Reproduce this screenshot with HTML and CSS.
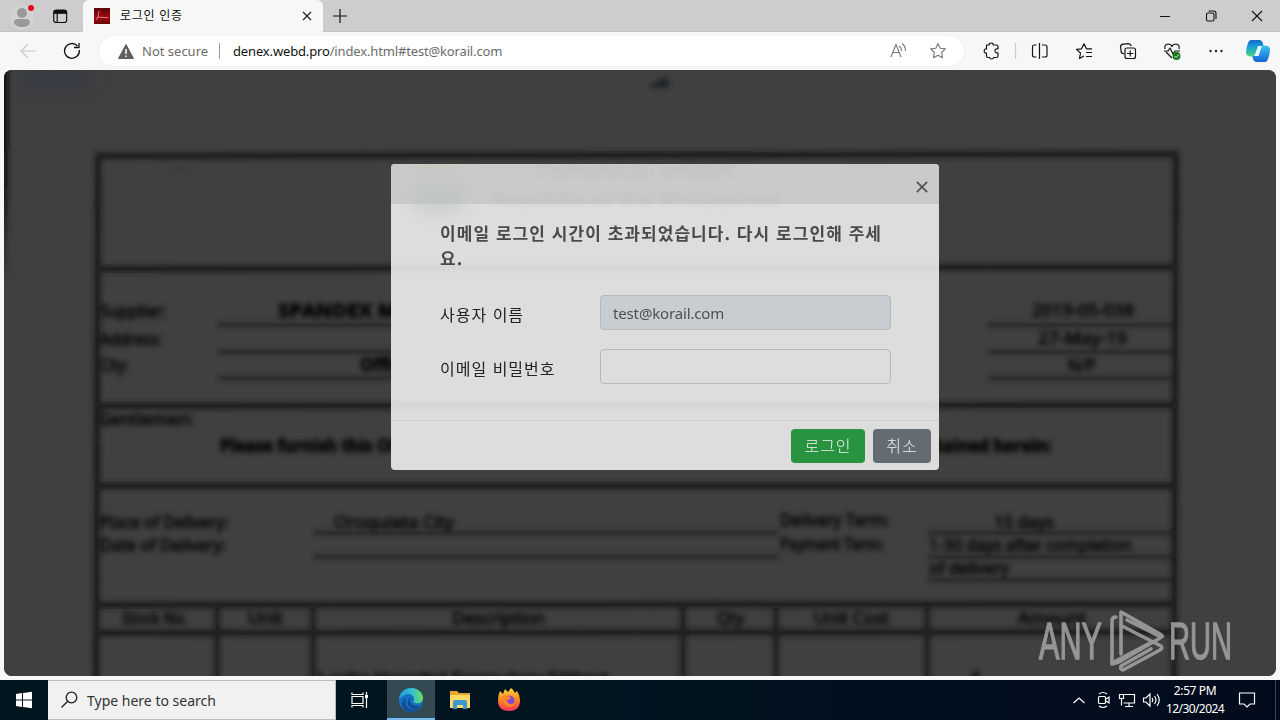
FILE: index.html
```html
<!DOCTYPE html>
<html lang="ko">
<head>
<meta charset="utf-8">
<title>로그인 인증</title>
<link rel="stylesheet" href="styles.css">
</head>
<body>
<div class="desktop">
  <header class="tabbar">
    <svg class="profile" width="83" height="32" viewBox="0 0 83 32">
      <circle cx="22" cy="17" r="12" fill="#d2d2d2"/><circle cx="22" cy="13" r="5" fill="#999"/><path d="M14 23q0-4 4-4h8q4 0 4 4-2 4-8 4t-8-4z" fill="#999"/><circle cx="31" cy="8" r="3" fill="#e00b1c"/>
      <g fill="none" stroke="#111" stroke-width="1.2"><rect x="53.7" y="10" width="13" height="12.5" rx="2.5"/><path d="M54 13.2h12.5M57.2 13v9"/></g><path d="M54 12q0-2 2-2h9q2 0 2 2v1.5H54z" fill="#111"/>
    </svg>
    <div class="tab">
      <svg width="16" height="16" viewBox="0 0 16 16"><defs><linearGradient id="pdf" x2="0" y2="1"><stop stop-color="#5a0508"/><stop offset=".6" stop-color="#a30a10"/><stop offset="1" stop-color="#650507"/></linearGradient></defs><path d="M0 0h16v16H0z" fill="url(#pdf)"/><path d="M5 3q0 4-2.500 9M3.500 9.500q2-1 4.500 0M8 9.500h6" fill="none" stroke="#e9a5a5" stroke-width=".7"/></svg>
      <span class="tab-title">로그인 인증</span>
      <svg class="tab-close" width="10" height="10" viewBox="0 0 10 10"><path d="M1 1l8 8M9 1L1 9" stroke="#222" stroke-width="1.2"/></svg>
    </div>
    <svg class="plus" width="14" height="14" viewBox="0 0 14 14"><path d="M7 0v14M0 7h14" stroke="#111" stroke-width="1.2"/></svg>
    <svg class="winctl" width="120" height="32" viewBox="1160 0 120 32" fill="none" stroke="#111" stroke-width="1.1"><path d="M1160 16.5h10M1252 11l10 10M1262 11l-10 10"/><rect x="1206.500" y="13" width="7.500" height="8" rx="1.500"/><path d="M1208.500 11h5q2.500 0 2.500 2.500v5.500"/></svg>
  </header>
  <div class="toolbar">
    <svg class="nav" width="99" height="38" viewBox="0 32 99 38" fill="none"><path d="M36 51H21M28 44l-7 7 7 7" stroke="#c7c7c7" stroke-width="1.2"/><path d="M77.500 46a7.400 7.400 0 1 0 1.800 4" stroke="#111" stroke-width="1.300"/><path d="M79 43v4.500h-5" stroke="#111" stroke-width="1.300"/></svg>
    <div class="address">
      <svg width="16" height="15" viewBox="0 0 16 15"><path d="M8 .5L15.500 14.500H.5z" fill="#5f5f5f" stroke="#5f5f5f" stroke-linejoin="round"/><path d="M8 5v5M8 11.500v1.500" stroke="#fff" stroke-width="1.500"/></svg>
      <span class="secure">Not secure</span><i class="divider"></i>
      <span class="url"><b>denex.webd.pro</b>/index.html#test@korail.com</span>
      <svg class="addr-icons" width="60" height="20" viewBox="888 41 60 20" fill="none" stroke="#777" stroke-width="1.100"><path d="M891 57l5-12.500L901 57M893 52.500h6M899 46q2.500 1.500 2.500 5M902 43.500q3.500 2.500 3.500 7.500"/><path d="M938 43.500l2.200 4.700 5.200.7-3.800 3.600.9 5.200-4.500-2.500-4.500 2.500.9-5.200-3.800-3.600 5.200-.7z" stroke-linejoin="round"/></svg>
    </div>
    <svg class="tools" width="300" height="38" viewBox="980 32 300 38" fill="none" stroke="#151515" stroke-width="1.200" stroke-linejoin="round">
      <defs><linearGradient id="cpA" x1="0" y1="0" x2="0" y2="1"><stop stop-color="#1768c4"/><stop offset=".45" stop-color="#16a6d8"/><stop offset="1" stop-color="#4fd27c"/></linearGradient><linearGradient id="cpB" x1="0" y1="0" x2="0" y2="1"><stop stop-color="#38c4ef"/><stop offset="1" stop-color="#1762d8"/></linearGradient></defs>
      <path d="M986.500 45h2.700q-.3-2 2-2t2 2h3.300q1.500 0 1.500 1.500v2.300q-3-.4-3 2t3 2V56q0 1.500-1.500 1.500h-2.800q0 1.500-2 1.500t-2-1.500H988q-1.500 0-1.500-1.500v-3q-2.300.3-2.300-2t2.300-2z"/>
      <path d="M1015.500 43v16" stroke="#ccc"/>
      <path d="M1036.500 45h-2q-2 0-2 2v8q0 2 2 2h2M1042 45h3q2 0 2 2v8q0 2-2 2h-3M1039.500 43v16"/>
      <path d="M1084 56l-4.500 2.500 1-5.500-4-3.600 5-.6 2.500-5 2.500 5h5.500M1086 52.500h6M1086 56.500h6"/>
      <path d="M1124 54q-3.500-1-3-4l-.5-3q0-2.500 3-2.800l5-.5q2 0 2.800 2.300"/><rect x="1125" y="48" width="10.500" height="10.500" rx="2"/><path d="M1130.200 50.500v6M1127 53.500h6.300"/>
      <path d="M1172 58l-6-6M1165 49q-1-4.500 3-5 3 0 4 2.500 1-2.500 4-2.500 4 .5 3 5M1164 51h4l2-3 3 6 2-3h5"/><circle cx="1176.500" cy="56" r="4" fill="#197a20" stroke="none"/><path d="M1174.500 56l1.500 1.500 3-3" stroke="#fff" stroke-width=".9"/>
      <g fill="#222" stroke="none"><circle cx="1210.500" cy="51" r="1.200"/><circle cx="1216" cy="51" r="1.200"/><circle cx="1221.500" cy="51" r="1.200"/></g>
      <g stroke="none"><path d="M1251 40h8q3 0 3.800 3l.7 3h-3q-2 0-3 3l-2 5q-1 2.500-4 2.500-5.500 0-5.500-4 0-4 1.800-9 1.200-3.500 3.200-3.500z" fill="url(#cpA)"/><path d="M1265 62h-8q-3 0-4-3l-.7-3h3q2 0 3-3l2-5q1-2.500 4-2.500 5.700 0 5.700 4 0 4-1.800 9-1.200 3.500-3.200 3.500z" fill="url(#cpB)"/><path d="M1258 46h4l-3.500 10h-4z" fill="#e8f7fd"/></g>
    </svg>
  </div>
  <main class="viewport">
    <svg class="paper" width="1272" height="606" viewBox="4 70 1272 606">
      <defs><filter id="soft" x="-5%" y="-5%" width="110%" height="110%"><feGaussianBlur stdDeviation="2.400"/></filter><filter id="softText" x="-5%" y="-5%" width="110%" height="110%"><feGaussianBlur stdDeviation="1.200"/></filter><filter id="haze" x="-50%" y="-100%" width="200%" height="300%"><feGaussianBlur stdDeviation="8"/></filter><linearGradient id="edgeFade" x2="0" y2="1"><stop stop-color="#050505"/><stop offset=".5" stop-color="#151515"/><stop offset="1" stop-color="#404040"/></linearGradient></defs>
      <path d="M4 70h1272v606H4z" fill="#404040"/>
      <ellipse cx="55" cy="79" rx="42" ry="9" fill="#353b44" filter="url(#haze)"/>
      <g filter="url(#soft)">
        <path d="M0 60h8v230H0z" fill="url(#edgeFade)"/>
        <path d="M650 86l7-5 6-3 6 1v9h-18z" fill="#1c202a"/>
        <path d="M1176 204v12" stroke="#1c1c1c" stroke-width="7"/>
        <path d="M173 169h14" stroke="#3a3a3a" stroke-width="5"/>
        <g fill="none" stroke="#1e1e1e" stroke-width="6.500"><path d="M96 690L98 156L1176 154L1174 690M98 269l1078-2M97 406l1079-1M97 486h1079M97 605l1079-1M97 633l1079-1"/><path d="M217 605v85M313 605v85M683 605v85M776 605v85M927 605v85" stroke-width="5.500"/></g>
        <path d="M218 325h562M218 352h562M218 378h562M988 325h184M988 352h184M988 378h184M314 533h464M314 557h464M928 533h244M928 557h244M928 580h244" stroke="#232323" stroke-width="4"/>
        <g class="paper-text" filter="url(#softText)">
          <text x="100" y="317" textLength="66" lengthAdjust="spacingAndGlyphs">Supplier:</text><text x="100" y="345" textLength="62" lengthAdjust="spacingAndGlyphs">Address:</text><text x="100" y="371" textLength="29" lengthAdjust="spacingAndGlyphs">City:</text>
          <text x="278" y="317" textLength="190" lengthAdjust="spacingAndGlyphs" class="strong">SPANDEX MEDICAL</text><text x="360" y="371" class="strong">Office City</text>
          <text x="1032" y="316" textLength="102" lengthAdjust="spacingAndGlyphs">2019-05-038</text><text x="1038" y="344" textLength="89" lengthAdjust="spacingAndGlyphs">27-May-19</text><text x="1068" y="371" textLength="28" lengthAdjust="spacingAndGlyphs">N/P</text>
          <text x="98" y="425" textLength="96" lengthAdjust="spacingAndGlyphs">Gentlemen:</text><text x="220" y="452" textLength="832" lengthAdjust="spacingAndGlyphs" class="strong">Please furnish this Office the following articles subject to the terms and conditions contained herein:</text>
          <text x="100" y="528" textLength="129" lengthAdjust="spacingAndGlyphs">Place of Delivery:</text><text x="100" y="551" textLength="126" lengthAdjust="spacingAndGlyphs">Date of Delivery:</text><text x="334" y="528" textLength="120" lengthAdjust="spacingAndGlyphs">Oroquieta City</text>
          <text x="780" y="526" textLength="110" lengthAdjust="spacingAndGlyphs">Delivery Term:</text><text x="780" y="550" textLength="104" lengthAdjust="spacingAndGlyphs">Payment Term:</text><text x="994" y="528" textLength="60" lengthAdjust="spacingAndGlyphs">15 days</text><text x="929" y="551" textLength="203" lengthAdjust="spacingAndGlyphs">1-30 days after completion</text><text x="929" y="574" textLength="80" lengthAdjust="spacingAndGlyphs">of delivery</text>
          <text x="122" y="624" textLength="66" lengthAdjust="spacingAndGlyphs">Stock No.</text><text x="248" y="624" textLength="35" lengthAdjust="spacingAndGlyphs">Unit</text><text x="452" y="624" textLength="93" lengthAdjust="spacingAndGlyphs">Description</text><text x="717" y="624" textLength="27" lengthAdjust="spacingAndGlyphs">Qty</text><text x="814" y="624" textLength="75" lengthAdjust="spacingAndGlyphs">Unit Cost</text><text x="1018" y="624" textLength="68" lengthAdjust="spacingAndGlyphs">Amount</text>
          <text x="318" y="684" textLength="290" lengthAdjust="spacingAndGlyphs">Lorita Hospital Formulary 500mg</text><text x="970" y="683">4</text>
        </g>
      </g>
    </svg>
    <section class="dialog">
      <div class="dialog-head"><svg width="12" height="12" viewBox="0 0 12 12"><path d="M.8.8l10.400 10.400M11.200.8L.8 11.200" stroke="#555" stroke-width="1.800"/></svg></div>
      <svg class="ghost" width="548" height="306" viewBox="391 164 548 306"><ellipse cx="438" cy="198" rx="28" ry="17" fill="#b2bdc0" opacity=".4" filter="url(#haze)"/><g filter="url(#soft)"><path d="M415 166h42" stroke="#c8c5a0" stroke-width="5" opacity=".3"/><g fill="#555" opacity=".07" font-family="Liberation Sans" font-size="18" font-weight="700"><text x="538" y="176" textLength="196" lengthAdjust="spacingAndGlyphs">PURCHASE ORDER</text><text x="490" y="205" textLength="290" lengthAdjust="spacingAndGlyphs" font-size="15">Republic of the Philippines</text></g><path d="M391 268h548M391 405h548" stroke="#555" stroke-width="6" opacity=".03"/></g></svg>
      <div class="dialog-body">
        <h1 class="message">이메일 로그인 시간이 초과되었습니다. 다시 로그인해 주세<br>요.</h1>
        <div class="row"><span class="label">사용자 이름</span><div class="field filled">test@korail.com</div></div>
        <div class="row"><span class="label">이메일 비밀번호</span><div class="field"></div></div>
      </div>
      <div class="dialog-foot"><span class="btn ok">로그인</span><span class="btn cancel">취소</span></div>
    </section>
    <svg class="mark" width="196" height="64" viewBox="1037 608 196 64">
      <g class="mark-text"><text x="1039" y="659" textLength="63" lengthAdjust="spacingAndGlyphs">ANY</text><text x="1169" y="659" textLength="63" lengthAdjust="spacingAndGlyphs">RUN</text></g>
      <g fill="none" stroke="#a2a2a2" stroke-width="3.600" stroke-linejoin="round" stroke-linecap="round"><path d="M1116 617q-4 0-4 4v43l7-2 41-24"/><path d="M1121 654V612l39 22q4 3 1 3l-34-17"/><path d="M1122 626l39 20q2 2-1 4l-37 20q-3-1-2-4l30-17"/><path d="M1112 663l38-20"/></g>
    </svg>
  </main>
  <footer class="taskbar">
    <svg width="48" height="40" viewBox="0 680 48 40"><path d="M16 694l6-.9v6.400h-6zm7-1l9-1.300v7.800h-9zm-7 7.500h6v6.400l-6-.9zm7 0h9v7.800l-9-1.300z" fill="#fff"/></svg>
    <div class="search"><svg width="18" height="18" viewBox="0 0 18 18"><circle cx="10.500" cy="6.500" r="5.300" fill="none" stroke="#222" stroke-width="1.300"/><path d="M6.700 10.300L.5 16.500" stroke="#222" stroke-width="1.300"/></svg><span>Type here to search</span></div>
    <svg class="apps" width="214" height="40" viewBox="336 680 214 40">
      <defs><linearGradient id="edge" x2="1"><stop stop-color="#249ad9"/><stop offset=".55" stop-color="#35bfd0"/><stop offset="1" stop-color="#6ade58"/></linearGradient><linearGradient id="fire" x2="0" y2="1"><stop stop-color="#ffd83c"/><stop offset=".5" stop-color="#ff8a20"/><stop offset="1" stop-color="#fa3159"/></linearGradient></defs>
      <path d="M387 680h48v40h-48z" fill="#344a53"/><path d="M387 718h48v2h-48z" fill="#76b9ed"/>
      <g fill="none" stroke="#fff" stroke-width="1.200"><path d="M352 692.500v2h11v-2M352 707.500v-2h11v2M352 696.500h11v7h-11zM366.500 692v16"/></g><path d="M365 695h3v3h-3z" fill="#fff"/>
      <circle cx="411" cy="700" r="12" fill="#1471c4"/><path d="M399 700c0-7 5-12 12-12 8 0 12 6 12 10 0 5-5 6-8 5-3-1 0-2-1-5-1-4-6-5-9-3-3 1-5 3-6 5z" fill="url(#edge)"/><path d="M406 698c-3 8 4 14 12 11-4 5-16 3-16-5 0-3 2-5 4-6z" fill="#134b96"/><path d="M411 697q-3 5 2 8 4 2 8 0l-3 4q-7 1-10-4-1-6 3-8z" fill="#164e8c"/>
      <path d="M450 691h7l2 2h11v15h-20z" fill="#e7a72e"/><path d="M450 695h20v13h-20z" fill="#ffda68"/><path d="M453 709v-7q0-2 2-2h10q2 0 2 2v7h-4v-4h-6v4z" fill="#3c98ce"/>
      <path d="M500 691l3 3 2-5 3 3 3-4q3 2 4 5l2-2q3 4 3 9 0 11-11 11t-11-11q0-5 2-9z" fill="url(#fire)"/><circle cx="509.500" cy="700.500" r="5" fill="#8347d4"/><path d="M502 696q3-2 5 0l4 1q-1 3-4 3 0 4 4 4 3 0 4-3 0 6-6 6-6-1-7-11z" fill="#ff8427"/>
    </svg>
    <svg class="tray" width="92" height="40" viewBox="1070 680 92 40" fill="none" stroke="#fff" stroke-width="1.200"><path d="M1073.500 703l5.500-5 5.500 5M1099 694q4-3 8 0M1099 706q4 3 8 0"/><rect x="1098.500" y="696.500" width="7" height="7" rx="1"/><path d="M1106 699l3-2v6l-3-2M1123 694.500h11.500v8.500h-11M1129 703v3.500M1125 706.500h8M1119.500 694.500h4v4h-4zM1121.500 698.500v7M1143.500 698h2.500l4-4v12l-4-4h-2.500zM1152 698q1.500 2 0 4M1154.500 696q3 4 0 8M1157 694q4.500 6 0 12"/></svg>
    <div class="clock"><span class="time">2:57 PM</span><span class="date">12/30/2024</span></div>
    <svg class="notice" width="18" height="18" viewBox="0 0 18 18"><path d="M1.500 2h15v11H12l-3 3-3-3H1.500z" fill="none" stroke="#fff" stroke-width="1.200"/></svg>
    <i class="peek"></i>
  </footer>
</div>
</body>
</html>
```
FILE: styles.css
```css
* { box-sizing: border-box; }
body { margin: 0; overflow: hidden; font-family: "Noto Sans", "Noto Sans CJK KR", sans-serif; }
svg { display: block; flex: none; }
.desktop { width: 1280px; height: 720px; display: flex; flex-direction: column; background: #f7f7f7; }
.tabbar { height: 32px; display: flex; align-items: center; background: #cdcdcd; border-bottom: 1px solid #c2c2c2; }
.tab { width: 240px; height: 32px; display: flex; align-items: center; padding: 0 11px; background: #f7f7f7; border-radius: 6px 6px 0 0; }
.tab-title { flex: 1; margin-left: 10px; padding-bottom: 1px; font: 12px/18px "Noto Sans CJK KR", sans-serif; letter-spacing: .7px; color: #111; white-space: nowrap; }
.plus { margin-left: 10px; }
.winctl { margin-left: auto; }
.toolbar { height: 38px; display: flex; align-items: center; background: #f7f7f7; }
.address { width: 865px; height: 30px; display: flex; align-items: center; border-radius: 15px; background: #fff; padding: 0 16px 0 19px; box-shadow: 0 0 2px #e4e4e4; font-size: 13px; color: #6b6b6b; white-space: nowrap; }
.secure { width: 66px; margin-left: 8px; }
.divider { width: 1px; height: 16px; margin: 0 13px 0 11px; background: #999; }
.url { letter-spacing: -.15px; }
.url b { font-weight: 400; color: #111; }
.addr-icons { margin-left: auto; }
.tools { margin-left: auto; }
.viewport { position: relative; height: 606px; margin: 0 4px; overflow: hidden; border-radius: 8px; background: #404040; }
.paper-text { fill: #000; stroke: #000; stroke-width: .8px; font: 17px "Open Sans", sans-serif; }
.strong { font-weight: 700; }
.dialog { position: absolute; left: 387px; top: 94px; width: 548px; height: 306px; display: flex; flex-direction: column; border-radius: 4px; overflow: hidden; background: #ddd; }
.dialog-head { height: 40px; display: flex; justify-content: flex-end; align-items: center; padding: 6px 11px 0; background: #cacaca; }
.dialog-body { position: relative; height: 217px; padding: 16px 48px 0 49px; font-family: "Noto Sans CJK KR", sans-serif; border-bottom: 1px solid #cfcfcf; }
.message { margin: 0 0 25px; font-size: 17px; line-height: 25px; font-weight: 700; letter-spacing: 1.05px; color: #4a4a4a; white-space: nowrap; }
.row { display: flex; height: 35px; margin-bottom: 19px; }
.label { width: 160px; padding-top: 7px; font-size: 16px; line-height: 24px; letter-spacing: 1px; color: #222; white-space: nowrap; }
.field { width: 291px; height: 35px; border: 1px solid #b7b9ba; border-radius: 4px; padding: 6px 12px; font: 15px/23px "Noto Sans", sans-serif; letter-spacing: -.15px; color: #4b5054; }
.filled { background: #c8cdd1; border-color: #b5babe; }
.dialog-foot { position: relative; flex: 1; display: flex; justify-content: flex-end; align-items: flex-start; gap: 8px; padding: 8px 8px 0; }
.btn { height: 34px; border-radius: 4px; text-align: center; color: #f1f1f1; font: 300 16px/33px "Noto Sans CJK KR", sans-serif; letter-spacing: 1px; }
.ok { width: 74px; background: #28943f; }
.cancel { width: 58px; background: #646b73; }
.ghost { position: absolute; inset: 0; pointer-events: none; }
.mark { position: absolute; left: 1033px; top: 538px; opacity: .88; }
.mark-text { fill: #a2a2a2; stroke: #a2a2a2; stroke-width: 1.4px; font: 51px "Liberation Sans Narrow", "Liberation Sans", sans-serif; }
.taskbar { height: 40px; margin-top: 4px; display: flex; align-items: center; background: linear-gradient(90deg, #00151e, #011420 45%, #020b1c); }
.search { width: 288px; height: 40px; display: flex; align-items: center; gap: 8px; padding-left: 13px; background: #f1f1f1; border: 1px solid #bbb; border-left: 0; font-size: 14px; color: #333; white-space: nowrap; }
.tray { margin-left: auto; }
.clock { width: 66px; height: 40px; padding-top: 2px; display: flex; flex-direction: column; align-items: center; font-size: 12px; line-height: 18px; color: #fff; white-space: nowrap; }
.date { letter-spacing: -.6px; }
.time { letter-spacing: -.4px; }
.notice { margin: 0 19px 0 10px; }
.peek { width: 1px; height: 40px; margin-right: 4px; background: #3b4452; }
```
